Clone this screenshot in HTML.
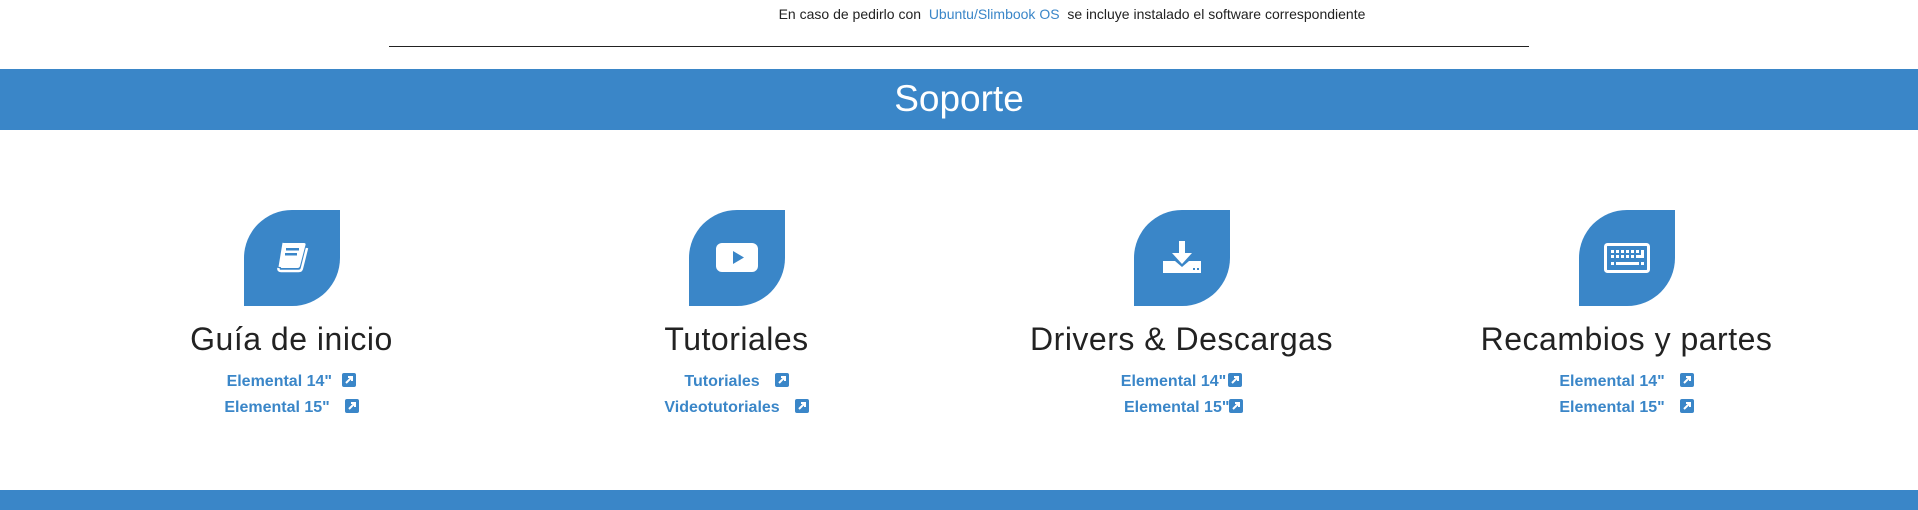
<!DOCTYPE html>
<html><head><meta charset="utf-8"><style>
*{margin:0;padding:0;box-sizing:border-box}
html,body{width:1918px;height:510px;overflow:hidden}
body{background:#fff;font-family:"Liberation Sans",sans-serif;position:relative}
.top{position:absolute;top:6px;left:0;width:1918px;text-align:center;font-size:14px;color:#222;padding-left:226px}
.top span{color:#3a86c8}
.rule{position:absolute;top:46px;left:389px;width:1140px;height:1px;background:#222}
.band{position:absolute;left:0;width:1918px;background:#3a86c8;color:#fff;text-align:center;font-size:37px;overflow:hidden}
.col{position:absolute;top:210px;width:445px;text-align:center}
.icon{width:96px;height:96px;margin:0 auto;background:#3a86c8;border-radius:48px 0 48px 0;display:flex;align-items:center;justify-content:center}
.col h2{font-weight:normal;font-size:32px;color:#222;margin-top:14px;line-height:38px;letter-spacing:0.5px}
.col a{display:block;color:#3a86c8;font-weight:bold;font-size:16px;line-height:26px;text-decoration:none}
.col .l1{margin-top:11px}
.ext{display:inline-block;width:14px;height:14px;background:#3a86c8;border-radius:2px;vertical-align:-1px;margin-left:6px;position:relative}
.ext svg{position:absolute;left:0;top:0}
</style></head><body>
<div class="top">En caso de pedirlo con &nbsp;<span>Ubuntu/Slimbook OS</span>&nbsp; se incluye instalado el software correspondiente</div>
<div class="rule"></div>
<div class="band" style="top:69px;height:61px;line-height:60px">Soporte</div>

<div class="col" style="left:69px">
 <div class="icon"><svg width="44" height="44" viewBox="0 0 44 44"><path d="M14 7h20q2 0 1.5 2L30 30q-.5 2-2.5 2H11z" fill="#fff"/><path d="M37 12l-5 20q-.5 3-3.5 3H11q-3 0-2.5-3" fill="none" stroke="#fff" stroke-width="2.5" stroke-linejoin="round"/><path d="M10 31l4-24" stroke="#fff" stroke-width="3"/><rect x="16" y="12" width="13" height="2.5" fill="#3a86c8"/><rect x="15" y="17" width="12" height="2.5" fill="#3a86c8"/></svg></div>
 <h2>Guía de inicio</h2>
 <a class="l1">Elemental 14" <i class="ext"><svg width="14" height="14"><path d="M4 10L10 4M6 4h4v4" stroke="#fff" stroke-width="2" fill="none"/></svg></i></a>
 <a>Elemental 15" &nbsp;<i class="ext"><svg width="14" height="14"><path d="M4 10L10 4M6 4h4v4" stroke="#fff" stroke-width="2" fill="none"/></svg></i></a>
</div>

<div class="col" style="left:514px">
 <div class="icon"><svg width="44" height="32" viewBox="0 0 44 32"><rect x="1" y="1" width="42" height="29" rx="6" fill="#fff"/><path d="M18 9l11 6.5-11 6.5z" fill="#3a86c8"/></svg></div>
 <h2>Tutoriales</h2>
 <a class="l1">Tutoriales &nbsp;<i class="ext"><svg width="14" height="14"><path d="M4 10L10 4M6 4h4v4" stroke="#fff" stroke-width="2" fill="none"/></svg></i></a>
 <a>Videotutoriales &nbsp;<i class="ext"><svg width="14" height="14"><path d="M4 10L10 4M6 4h4v4" stroke="#fff" stroke-width="2" fill="none"/></svg></i></a>
</div>

<div class="col" style="left:959px">
 <div class="icon"><svg width="42" height="42" viewBox="0 0 42 42"><rect x="18" y="4" width="6" height="14" fill="#fff"/><path d="M11 16h20l-10 11z" fill="#fff"/><path d="M2 24h12l7 6 7-6h12v12H2z" fill="#fff"/><rect x="32" y="31" width="2" height="2" fill="#3a86c8"/><rect x="36" y="31" width="2" height="2" fill="#3a86c8"/></svg></div>
 <h2>Drivers &amp; Descargas</h2>
 <a class="l1">Elemental 14"<i class="ext" style="margin-left:2px"><svg width="14" height="14"><path d="M4 10L10 4M6 4h4v4" stroke="#fff" stroke-width="2" fill="none"/></svg></i></a>
 <a>&nbsp;Elemental 15"<i class="ext" style="margin-left:0"><svg width="14" height="14"><path d="M4 10L10 4M6 4h4v4" stroke="#fff" stroke-width="2" fill="none"/></svg></i></a>
</div>

<div class="col" style="left:1404px">
 <div class="icon"><svg width="46" height="30" viewBox="0 0 46 30"><rect x="1.5" y="1.5" width="43" height="27" rx="2" fill="none" stroke="#fff" stroke-width="3"/><g fill="#fff"><rect x="7" y="7" width="3" height="3"/><rect x="12" y="7" width="3" height="3"/><rect x="17" y="7" width="3" height="3"/><rect x="22" y="7" width="3" height="3"/><rect x="27" y="7" width="3" height="3"/><rect x="32" y="7" width="3" height="3"/><rect x="37" y="7" width="3" height="8"/><rect x="7" y="12" width="3" height="3"/><rect x="12" y="12" width="3" height="3"/><rect x="17" y="12" width="3" height="3"/><rect x="22" y="12" width="3" height="3"/><rect x="27" y="12" width="3" height="3"/><rect x="32" y="12" width="5" height="3"/><rect x="7" y="19" width="3" height="3"/><rect x="12" y="19" width="23" height="3"/><rect x="37" y="19" width="3" height="3"/></g></svg></div>
 <h2>Recambios y partes</h2>
 <a class="l1">Elemental 14" &nbsp;<i class="ext"><svg width="14" height="14"><path d="M4 10L10 4M6 4h4v4" stroke="#fff" stroke-width="2" fill="none"/></svg></i></a>
 <a>Elemental 15" &nbsp;<i class="ext"><svg width="14" height="14"><path d="M4 10L10 4M6 4h4v4" stroke="#fff" stroke-width="2" fill="none"/></svg></i></a>
</div>

<div class="band" style="top:490px;height:20px;line-height:90px">Accesorios</div>
</body></html>
